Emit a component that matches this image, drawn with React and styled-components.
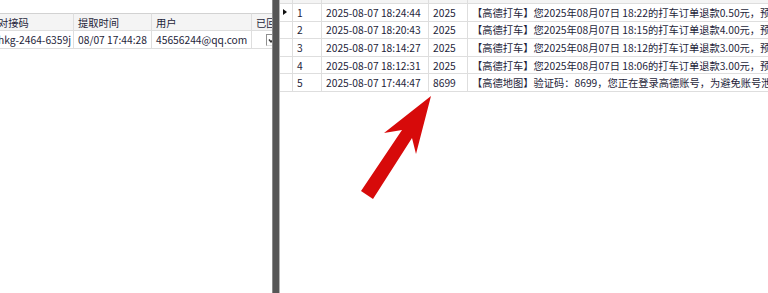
import React from 'react';
import styled, { createGlobalStyle } from 'styled-components';

const GlobalStyle = createGlobalStyle`
    html, body {
        margin: 0;
        padding: 0;
        background: #ffffff;
        overflow: hidden;
    }
    * { box-sizing: border-box; }
`;

const Page = styled.div`
    display: flex;
    width: 768px;
    height: 293px;
    font-family: "Noto Sans CJK SC", "Noto Sans", sans-serif;
    font-size: 10.25px;
    color: #1e1e3a;
`;

const LeftPane = styled.div`
    width: 272px;
    flex-shrink: 0;
    overflow: hidden;
    padding-top: 13px;
`;

const Splitter = styled.div`
    width: 8px;
    flex-shrink: 0;
    background: #565656;
    border-left: 1px solid #8a8a8a;
    border-right: 1px solid #b4b4b4;
`;

const RightPane = styled.div`
    flex: 1;
    position: relative;
    overflow: hidden;
`;

const Row = styled.div`
    display: grid;
    grid-template-columns: ${p => p.cols};
    height: ${p => p.h || '18px'};
    margin-left: ${p => p.shift || '0'};
    width: max-content;
`;

const Cell = styled.div`
    padding: 0 ${p => (p.pad === undefined ? 4 : p.pad)}px;
    border-right: 1px solid #dedede;
    border-bottom: 1px solid #dedede;
    white-space: nowrap;
    overflow: hidden;
    display: flex;
    align-items: center;
    background: ${p => (p.head ? '#f4f4f4' : '#ffffff')};
    border-top: ${p => (p.top ? '1px solid #d2d2d2' : 'none')};
`;

const Check = styled.span`
    width: 12px;
    height: 12px;
    margin-left: 10px;
    border: 1px solid #8f8f8f;
    border-right-color: #e0e0e0;
    border-bottom-color: #e0e0e0;
    display: flex;
    align-items: center;
    justify-content: center;
    flex-shrink: 0;
`;

const Pointer = styled.span`
    width: 0;
    height: 0;
    border-top: 3px solid transparent;
    border-bottom: 3px solid transparent;
    border-left: 4px solid #111;
    margin-left: 1px;
`;

const RightGrid = styled.div`
    margin-top: -14px;
`;

const Arrow = styled.svg`
    position: absolute;
    left: 0;
    top: 0;
    pointer-events: none;
`;

const leftCols = '80px 78px 100px 40px';
const rightCols = '13px 29px 107px 39px 460px';

const messages = [
    { no: 1, time: '2025-08-07 18:24:44', code: '2025', text: '【高德打车】您2025年08月07日 18:22的打车订单退款0.50元，预计1-3个工作日原路退回。' },
    { no: 2, time: '2025-08-07 18:20:43', code: '2025', text: '【高德打车】您2025年08月07日 18:15的打车订单退款4.00元，预计1-3个工作日原路退回。' },
    { no: 3, time: '2025-08-07 18:14:27', code: '2025', text: '【高德打车】您2025年08月07日 18:12的打车订单退款3.00元，预计1-3个工作日原路退回。' },
    { no: 4, time: '2025-08-07 18:12:31', code: '2025', text: '【高德打车】您2025年08月07日 18:06的打车订单退款3.00元，预计1-3个工作日原路退回。' },
    { no: 5, time: '2025-08-07 17:44:47', code: '8699', text: '【高德地图】验证码：8699，您正在登录高德账号，为避免账号泄露，请勿告知他人。' },
];

const App = () => {
    return (
        <Page>
            <GlobalStyle />
            <LeftPane>
                <Row cols={leftCols} shift="-6px">
                    <Cell head top>对接码</Cell>
                    <Cell head top>提取时间</Cell>
                    <Cell head top>用户</Cell>
                    <Cell head top>已回</Cell>
                </Row>
                <Row cols={leftCols} shift="-6px">
                    <Cell>hkg-2464-6359j</Cell>
                    <Cell>08/07 17:44:28</Cell>
                    <Cell>45656244@qq.com</Cell>
                    <Cell>
                        <Check>
                            <svg width="8" height="8" viewBox="0 0 8 8">
                                <path d="M1 3.5 L3 6 L7 1.5" fill="none" stroke="#333" strokeWidth="1.4" />
                            </svg>
                        </Check>
                    </Cell>
                </Row>
            </LeftPane>
            <Splitter />
            <RightPane>
                <RightGrid>
                    <Row cols={rightCols}>
                        <Cell head pad={0} />
                        <Cell head>序号</Cell>
                        <Cell head>接收时间</Cell>
                        <Cell head>验证码</Cell>
                        <Cell head>短信内容</Cell>
                    </Row>
                    {messages.map(m => (
                        <Row cols={rightCols} h="17.6px" key={m.no}>
                            <Cell pad={2}>{m.no === 1 && <Pointer />}</Cell>
                            <Cell>{m.no}</Cell>
                            <Cell>{m.time}</Cell>
                            <Cell>{m.code}</Cell>
                            <Cell>{m.text}</Cell>
                        </Row>
                    ))}
                </RightGrid>
                <Arrow width="488" height="293" viewBox="0 0 488 293">
                    <polygon
                        points="151,96 104,133 122,130 81,191 93,199 132,138 136,154"
                        fill="#d70a0a"
                    />
                </Arrow>
            </RightPane>
        </Page>
    );
};

export default App;
